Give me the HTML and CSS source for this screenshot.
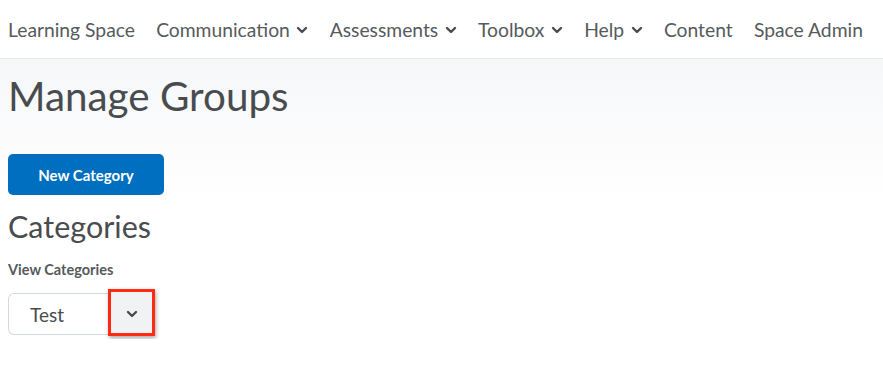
FILE: index.html
```html
<!DOCTYPE html>
<html>
<head>
<meta charset="utf-8">
<link rel="stylesheet" href="styles.css">
</head>
<body>
<nav class="nav">
  <span class="nav-item">Learning Space</span>
  <span class="nav-item">Communication <svg class="chev" viewBox="0 0 12 8"><path d="M2 2l4 4 4-4"/></svg></span>
  <span class="nav-item">Assessments <svg class="chev" viewBox="0 0 12 8"><path d="M2 2l4 4 4-4"/></svg></span>
  <span class="nav-item">Toolbox <svg class="chev" viewBox="0 0 12 8"><path d="M2 2l4 4 4-4"/></svg></span>
  <span class="nav-item">Help <svg class="chev" viewBox="0 0 12 8"><path d="M2 2l4 4 4-4"/></svg></span>
  <span class="nav-item">Content</span>
  <span class="nav-item">Space Admin</span>
</nav>
<header class="band">
  <h1 class="title">Manage Groups</h1>
  <button class="btn-primary">New Category</button>
</header>
<main class="main">
  <h2 class="subtitle">Categories</h2>
  <div class="label">View Categories</div>
  <div class="select">
    <span class="select-value">Test</span>
    <span class="select-arrow"><svg class="chev" viewBox="0 0 12 8"><path d="M2 2l4 4 4-4"/></svg></span>
  </div>
</main>
</body>
</html>
```
FILE: styles.css
```css
html, body {
  margin: 0;
  padding: 0;
  background: #fff;
  font-family: Lato, "Noto Sans", sans-serif;
  color: #494c4e;
}
.nav {
  display: flex;
  align-items: center;
  height: 59px;
  border-bottom: 1px solid #e6e8eb;
  box-sizing: border-box;
}
.nav-item {
  display: flex;
  align-items: center;
  gap: 6.6px;
  padding: 0 10px 0 8px;
  margin-right: 3.2px;
  font-size: 19.3px;
  color: #565a5c;
  white-space: nowrap;
  padding-top: 1px;
}
.chev {
  width: 12px;
  height: 8px;
  fill: none;
  stroke: #494c4e;
  stroke-width: 2.4;
  stroke-linecap: round;
  stroke-linejoin: round;
}
.band {
  background: linear-gradient(#f6f7f9, #ffffff);
  padding: 15px 8px 4px 8px;
  height: 140px;
  box-sizing: border-box;
  display: flex;
  flex-direction: column;
  align-items: flex-start;
}
.title {
  margin: 0;
  font-size: 40.4px;
  font-weight: 400;
  line-height: 44px;
  color: #494c4e;
}
.btn-primary {
  margin-top: 36px;
  width: 156px;
  height: 42px;
  border: none;
  border-radius: 5px;
  background: #006fbf;
  color: #fff;
  font-family: Lato, "Noto Sans", sans-serif;
  font-weight: 700;
  font-size: 15px;
}
.main {
  padding: 4px 8px;
}
.subtitle {
  margin: 5px 0 0 0;
  font-size: 30.5px;
  font-weight: 400;
  line-height: 36px;
  color: #494c4e;
}
.label {
  margin-top: 17px;
  font-size: 14.5px;
  font-weight: 700;
  color: #565a5c;
}
.select {
  margin-top: 15px;
  display: flex;
  width: 147px;
  height: 42px;
}
.select-value {
  flex: 1;
  display: flex;
  align-items: center;
  padding-left: 21px;
  font-size: 19px;
  color: #494c4e;
  border: 1px solid #d3d9e3;
  border-right: none;
  border-radius: 6px 0 0 6px;
  box-sizing: border-box;
}
.select-arrow {
  width: 47px;
  margin-top: -4px;
  margin-bottom: -1px;
  display: flex;
  align-items: center;
  justify-content: center;
  background: #f1f2f3;
  border: 3px solid #ff2a12;
  box-sizing: border-box;
  box-shadow: 1px 2px 4px rgba(0,0,0,0.35);
}
.select-arrow .chev {
  margin-top: 3px;
}
```
